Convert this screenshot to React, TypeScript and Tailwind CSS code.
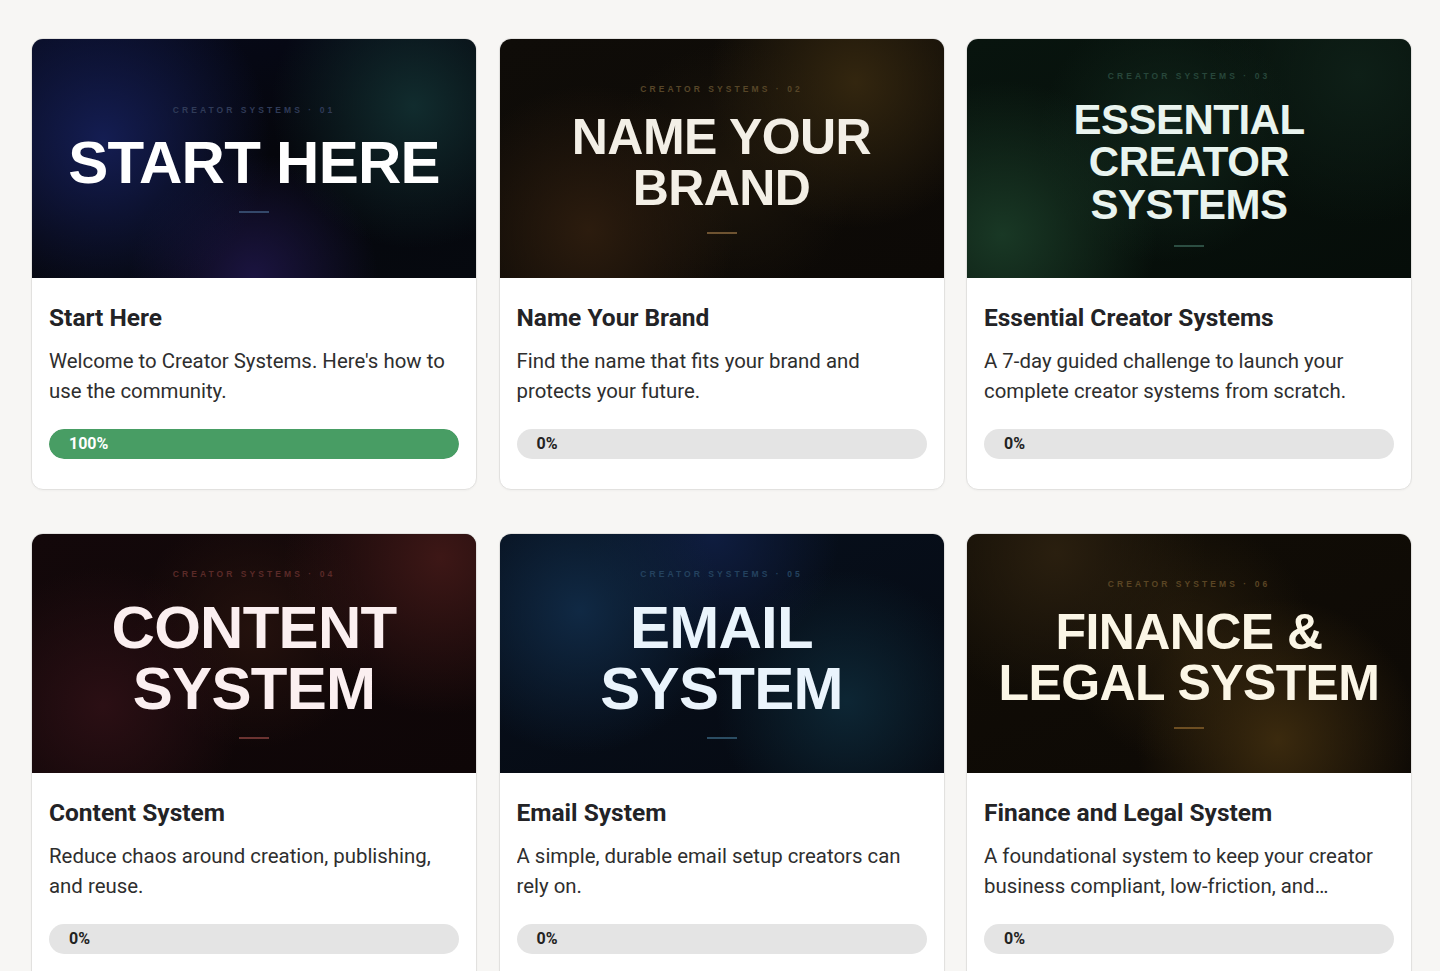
import React from 'react';

// --- course data ---
type Course = {
  num: string;
  cover: string[];
  title: string;
  description: string;
  progress: number;
  bg: string;
  eyebrow: string;
  heading: string;
  rule: string;
};

const COURSES: Course[] = [
  {
    num: '01',
    cover: ['START HERE'],
    title: 'Start Here',
    description: "Welcome to Creator Systems. Here's how to use the community.",
    progress: 100,
    bg: 'bg-[radial-gradient(circle_at_16%_42%,#141d52_0%,transparent_42%),radial-gradient(circle_at_86%_28%,#112c2e_0%,transparent_34%),radial-gradient(circle_at_50%_100%,#1b1440_0%,transparent_38%),linear-gradient(160deg,#070a1c_0%,#05060c_50%,#06090f_100%)]',
    eyebrow: 'text-[#303b58]',
    heading: 'text-white text-[60px]',
    rule: 'bg-[#34486a]',
  },
  {
    num: '02',
    cover: ['NAME YOUR', 'BRAND'],
    title: 'Name Your Brand',
    description: 'Find the name that fits your brand and protects your future.',
    progress: 0,
    bg: 'bg-[radial-gradient(circle_at_80%_18%,#33260f_0%,transparent_36%),radial-gradient(circle_at_20%_80%,#2c1c0e_0%,transparent_36%),radial-gradient(circle_at_52%_55%,#1c150b_0%,transparent_48%),linear-gradient(160deg,#0f0c08_0%,#0c0906_100%)]',
    eyebrow: 'text-[#574628]',
    heading: 'text-[#f3efe6] text-[50px]',
    rule: 'bg-[#6e5331]',
  },
  {
    num: '03',
    cover: ['ESSENTIAL', 'CREATOR', 'SYSTEMS'],
    title: 'Essential Creator Systems',
    description: 'A 7-day guided challenge to launch your complete creator systems from scratch.',
    progress: 0,
    bg: 'bg-[radial-gradient(circle_at_8%_82%,#193825_0%,transparent_34%),radial-gradient(circle_at_45%_40%,#10241a_0%,transparent_45%),radial-gradient(circle_at_88%_15%,#0e1f17_0%,transparent_34%),linear-gradient(160deg,#08140e_0%,#060d09_100%)]',
    eyebrow: 'text-[#27463a]',
    heading: 'text-[#e9f4ef] text-[42px]',
    rule: 'bg-[#2c4e42]',
  },
  {
    num: '04',
    cover: ['CONTENT', 'SYSTEM'],
    title: 'Content System',
    description: 'Reduce chaos around creation, publishing, and reuse.',
    progress: 0,
    bg: 'bg-[radial-gradient(circle_at_92%_10%,#3d1716_0%,transparent_34%),radial-gradient(circle_at_16%_72%,#2b0f14_0%,transparent_34%),radial-gradient(circle_at_50%_40%,#24110d_0%,transparent_45%),linear-gradient(160deg,#13080a_0%,#0e0607_100%)]',
    eyebrow: 'text-[#5a2a28]',
    heading: 'text-[#fbeff0] text-[60px]',
    rule: 'bg-[#6b3331]',
  },
  {
    num: '05',
    cover: ['EMAIL', 'SYSTEM'],
    title: 'Email System',
    description: 'A simple, durable email setup creators can rely on.',
    progress: 0,
    bg: 'bg-[radial-gradient(circle_at_18%_32%,#102944_0%,transparent_36%),radial-gradient(circle_at_48%_0%,#0f1d40_0%,transparent_38%),radial-gradient(circle_at_78%_70%,#0d2634_0%,transparent_34%),linear-gradient(160deg,#07101d_0%,#060a12_100%)]',
    eyebrow: 'text-[#24425f]',
    heading: 'text-[#eaf4fc] text-[60px]',
    rule: 'bg-[#2b4d63]',
  },
  {
    num: '06',
    cover: ['FINANCE &', 'LEGAL SYSTEM'],
    title: 'Finance and Legal System',
    description: 'A foundational system to keep your creator business compliant, low-friction, and sustainable as you grow.',
    progress: 0,
    bg: 'bg-[radial-gradient(circle_at_70%_86%,#3b2a0e_0%,transparent_38%),radial-gradient(circle_at_20%_8%,#2a1f0f_0%,transparent_36%),radial-gradient(circle_at_50%_45%,#251b0b_0%,transparent_48%),linear-gradient(160deg,#110d06_0%,#0d0905_100%)]',
    eyebrow: 'text-[#5a4524]',
    heading: 'text-[#fbf6e6] text-[50px]',
    rule: 'bg-[#6d4e22]',
  },
];

export default function App() {
  return (
    <div className="min-h-screen bg-[#f7f6f4] pl-[31px] pt-[38px] pb-10 font-['Roboto',sans-serif]">
      <div className="grid grid-cols-[446px_446px_446px] gap-x-[21.5px] gap-y-[43px]">
        {COURSES.map(c => (
          <CourseCard key={c.num} course={c} />
        ))}
      </div>
    </div>
  );
}

function CourseCard({ course }: { course: Course }) {
  return (
    <div className="overflow-hidden rounded-[12px] border border-[#e2e1df] bg-white shadow-[0_1px_2px_rgba(0,0,0,0.03)]">
      <div className={`flex h-[239px] flex-col items-center justify-center ${course.bg}`}>
        <p className={`mb-4 font-['Liberation_Sans',Arial,sans-serif] text-[8.5px] font-bold tracking-[0.36em] ${course.eyebrow}`}>
          CREATOR SYSTEMS · {course.num}
        </p>
        <h3 className={`text-center font-['Liberation_Sans',Arial,sans-serif] font-bold leading-[1.02] tracking-[-0.012em] ${course.heading}`}>
          {course.cover.map(line => (
            <span key={line} className="block">{line}</span>
          ))}
        </h3>
        <div className={`mt-[18px] h-[2px] w-[30px] ${course.rule}`}></div>
      </div>

      <div className="px-[17px] pt-6 pb-[30px]">
        <h4 className="text-[24.5px] font-bold leading-8 text-[#232326]">{course.title}</h4>
        <p className="mt-3 line-clamp-2 text-[20.4px] leading-[30px] text-[#2e2e2e]">{course.description}</p>
        <ProgressBar value={course.progress} />
      </div>
    </div>
  );
}

function ProgressBar({ value }: { value: number }) {
  const done = value >= 100;
  return (
    <div className="relative mt-[23px] h-[30px] overflow-hidden rounded-full bg-[#e4e4e4]">
      <div className="absolute inset-y-0 left-0 rounded-full bg-[#489d64]" style={{ width: `${value}%` }}></div>
      <span className={`relative flex h-full items-center pl-5 text-[16px] font-bold ${done ? 'text-white' : 'text-[#222]'}`}>
        {value}%
      </span>
    </div>
  );
}
